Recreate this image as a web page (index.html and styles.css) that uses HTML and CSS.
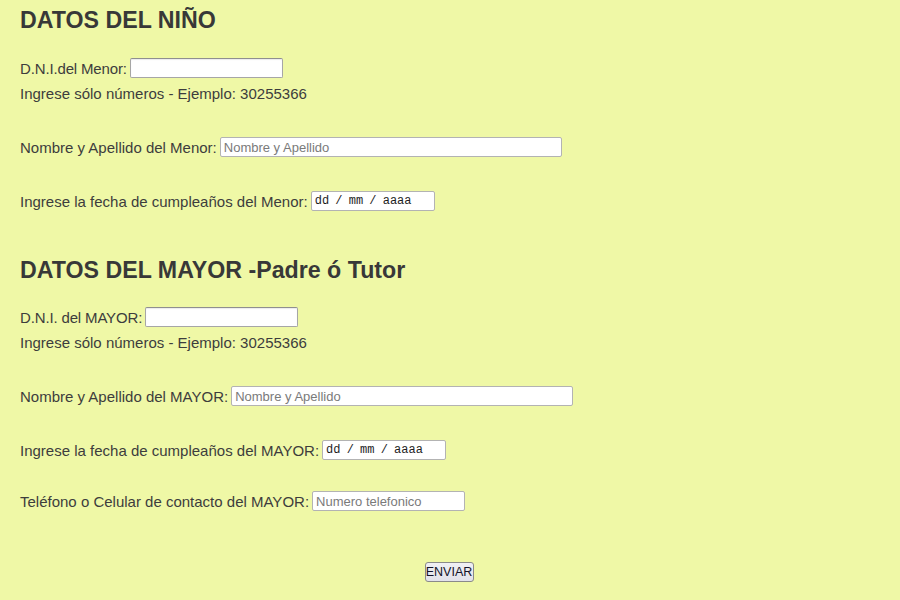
FILE: index.html
```html
<!DOCTYPE html>
<html lang="es">
<head>
<meta charset="utf-8">
<title>Datos</title>
<link rel="stylesheet" href="styles.css">
</head>
<body>
<form class="form">
  <h1 class="title">DATOS DEL NIÑO</h1>
  <div class="row r-dni"><label class="tight">D.N.I.del Menor:</label><input class="field w-dni" type="text"></div>
  <p class="help">Ingrese sólo números - Ejemplo: 30255366</p>
  <div class="row r-name"><label>Nombre y Apellido del Menor:</label><input class="field thin w-name" type="text" placeholder="Nombre y Apellido"></div>
  <div class="row r-date"><label>Ingrese la fecha de cumpleaños del Menor:</label><input class="field thin date w-date" type="text" placeholder="dd / mm / aaaa"></div>

  <h1 class="title t2">DATOS DEL MAYOR -Padre ó Tutor</h1>
  <div class="row r-dni2"><label class="tight">D.N.I. del MAYOR:</label><input class="field w-dni" type="text"></div>
  <p class="help">Ingrese sólo números - Ejemplo: 30255366</p>
  <div class="row r-name"><label>Nombre y Apellido del MAYOR:</label><input class="field thin w-name" type="text" placeholder="Nombre y Apellido"></div>
  <div class="row r-date"><label>Ingrese la fecha de cumpleaños del MAYOR:</label><input class="field thin date w-date" type="text" placeholder="dd / mm / aaaa"></div>
  <div class="row r-phone"><label>Teléfono o Celular de contacto del MAYOR:</label><input class="field thin w-phone" type="text" placeholder="Numero telefonico"></div>

  <div class="actions"><button class="btn" type="button">ENVIAR</button></div>
</form>
</body>
</html>
```
FILE: styles.css
```css
html, body {
  margin: 0;
  padding: 0;
  background: #eff8a6;
}
body {
  width: 900px;
  height: 600px;
  overflow: hidden;
  font-family: "Liberation Sans", Arial, sans-serif;
  color: #3d3d3d;
}
.form {
  padding: 6px 20px 0 20px;
  display: flex;
  flex-direction: column;
}
.title {
  margin: 0;
  font-size: 23.2px;
  line-height: 28px;
  font-weight: bold;
  color: #383838;
}
.t2 { margin-top: 45px; }
.row {
  display: flex;
  align-items: center;
  gap: 3px;
  height: 20px;
  font-size: 15px;
}
.row label { white-space: nowrap; }
.row label.tight { letter-spacing: -0.15px; }
.r-dni { margin-top: 24px; }
.r-dni2 { margin-top: 23px; }
.r-name { margin-top: 33px; }
.r-date { margin-top: 34px; }
.r-phone { margin-top: 31px; }
.help {
  margin: 6px 0 0 0;
  font-size: 15px;
  line-height: 20px;
}
.field {
  box-sizing: border-box;
  height: 20px;
  margin: 0;
  padding: 0 3px;
  background: #fff;
  border: 1px solid #a6a6a6;
  border-top-color: #8f8f8f;
  border-radius: 2px;
  box-shadow: inset 0 1px 1px rgba(0,0,0,0.08);
  font-family: "Liberation Sans", Arial, sans-serif;
  font-size: 13px;
  color: #333;
  outline: none;
}
.field.thin {
  border-color: #b3b3b3;
  box-shadow: none;
}
.field::placeholder { color: #7a7a7a; }
.field.date {
  font-family: "Liberation Mono", "Courier New", monospace;
  font-size: 12px;
  word-spacing: -1px;
  padding-left: 3px;
}
.field.date::placeholder { color: #1e1e1e; }
.w-dni { width: 153px; }
.w-name { width: 342px; }
.w-date { width: 124px; }
.w-phone { width: 153px; }
.actions {
  display: flex;
  justify-content: center;
  margin-top: 51px;
  padding-right: 2px;
}
.btn {
  box-sizing: border-box;
  height: 20px;
  width: 49px;
  padding: 0;
  font-family: "Liberation Sans", Arial, sans-serif;
  font-size: 12.5px;
  color: #141428;
  background: linear-gradient(#f0f0f4, #e2e2ea);
  border: 1px solid #8a8a8a;
  border-radius: 3px;
}
```
